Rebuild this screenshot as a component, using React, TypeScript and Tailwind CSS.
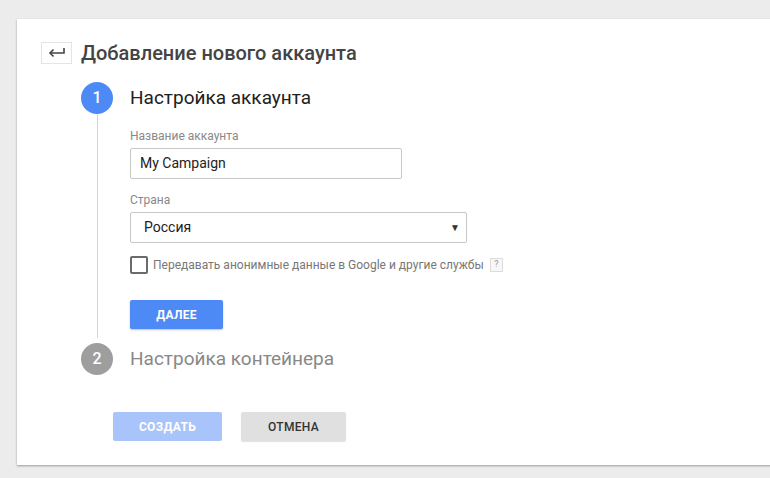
const FONT = { fontFamily: "Roboto, 'Noto Sans', sans-serif" };

function StepCircle({ n, active }: { n: number; active?: boolean }) {
  return (
    <div
      className={`w-8 h-8 rounded-full flex items-center justify-center text-white text-[16px] font-medium shrink-0 ${
        active ? "bg-[#4e8af5]" : "bg-[#9e9e9e]"
      }`}
    >
      {n}
    </div>
  );
}

export default function App() {
  return (
    <div className="min-h-screen bg-[#ececec] pt-[19px] pl-[17px] overflow-hidden" style={FONT}>
      <div className="w-[780px] bg-white shadow-[0_1px_2px_rgba(0,0,0,0.35)] pl-6 pt-[23px] pb-6">
        {/* Header */}
        <div className="flex items-center h-[22px]">
          <div className="w-[31px] h-[22px] border border-[#e4e4e4] flex items-center justify-center text-[#444]">
            <svg width="20" height="12" viewBox="0 0 20 12" fill="none">
              <path d="M17 1v5H3" stroke="#444" strokeWidth="1.6" />
              <path d="M6.5 2.5L3 6l3.5 3.5" stroke="#444" strokeWidth="1.6" />
            </svg>
          </div>
          <h1 className="ml-[9px] text-[20px] font-medium text-[#444] leading-none">
            Добавление нового аккаунта
          </h1>
        </div>

        {/* Step 1 */}
        <div className="flex mt-[18px] pl-10">
          <div className="flex flex-col items-center w-8">
            <StepCircle n={1} active />
            <div className="w-px flex-1 bg-[#d4d4d4] mb-[5px]" />
          </div>
          <div className="ml-[17px] pb-[14px]">
            <div className="h-8 flex items-center text-[19px] text-[#212121]">
              Настройка аккаунта
            </div>
            <div className="mt-[14px] text-[12px] leading-4 text-[#888]">
              Название аккаунта
            </div>
            <div className="mt-1 w-[272px] h-[31px] border border-[#c8c8c8] rounded-[2px] flex items-center px-[9px] text-[14px] text-[#222]">
              My Campaign
            </div>
            <div className="mt-[13px] text-[12px] leading-4 text-[#888]">Страна</div>
            <div className="mt-1 w-[337px] h-[31px] border border-[#c8c8c8] rounded-[2px] flex items-center justify-between pl-[13px] pr-[6px] text-[14px] text-[#222]">
              <span>Россия</span>
              <span className="text-[10px] text-[#333]">▼</span>
            </div>
            <div className="mt-[13px] flex items-center h-[18px]">
              <div className="w-[18px] h-[18px] border-2 border-[#6b6b6b] rounded-[2px]" />
              <span className="ml-[5px] text-[12px] text-[#777]">
                Передавать анонимные данные в Google и другие службы
              </span>
              <span className="ml-[6px] w-[13px] h-[14px] border border-[#ddd] bg-[#f7f7f7] text-[9px] text-[#999] flex items-center justify-center">
                ?
              </span>
            </div>
            <button className="mt-[26px] w-[93px] h-[29px] rounded-[2px] bg-[#4e8af5] text-white text-[12px] font-bold tracking-[0.3px] shadow-[0_1px_2px_rgba(0,0,0,0.25)]">
              ДАЛЕЕ
            </button>
          </div>
        </div>

        {/* Step 2 */}
        <div className="flex items-center pl-10">
          <StepCircle n={2} />
          <div className="ml-[17px] text-[19px] text-[#888]">Настройка контейнера</div>
        </div>

        {/* Actions */}
        <div className="flex mt-[37px] pl-[72px] gap-[19px]">
          <button className="w-[109px] h-[29px] rounded-[2px] bg-[#a8c4fb] text-white text-[12px] font-bold tracking-[0.3px]">
            СОЗДАТЬ
          </button>
          <button className="w-[105px] h-[29px] rounded-[2px] bg-[#e0e0e0] text-[#333] text-[12px] font-medium tracking-[0.3px] shadow-[0_1px_1px_rgba(0,0,0,0.12)]">
            ОТМЕНА
          </button>
        </div>
      </div>
    </div>
  );
}
